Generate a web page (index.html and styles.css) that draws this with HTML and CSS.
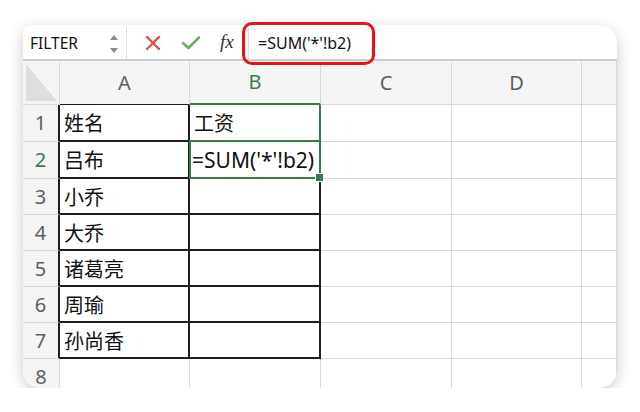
FILE: index.html
```html
<!DOCTYPE html>
<html lang="zh-CN">
<head>
  <meta charset="UTF-8">
  <title>SUM</title>
  <link rel="stylesheet" href="styles.css">
</head>
<body>
  <div class="sheet">
    <div class="fbar">
      <div class="namebox">
        <span>FILTER</span>
        <svg class="spin" width="10" height="20" viewBox="0 0 10 20">
          <path d="M1 6 L5 1 L9 6 Z" fill="#8a8a8a"/>
          <path d="M1 14 L5 19 L9 14 Z" fill="#8a8a8a"/>
        </svg>
      </div>
      <div class="tools">
        <svg width="16" height="16" viewBox="0 0 16 16">
          <path d="M2 2 L14 14 M14 2 L2 14" stroke="#d4504f" stroke-width="2.4" stroke-linecap="round"/>
        </svg>
        <svg width="20" height="16" viewBox="0 0 20 16">
          <path d="M2 8 L7.5 13 L18 2.5" stroke="#6cab5e" stroke-width="2.6" fill="none" stroke-linecap="round" stroke-linejoin="round"/>
        </svg>
        <span class="fx">fx</span>
      </div>
      <div class="formula">=SUM('*'!b2)</div>
    </div>
    <div class="ring"></div>

    <div class="gridwrap">
      <div class="grid">
        <div class="hd corner"></div>
        <div class="hd col tb">A</div>
        <div class="hd col on">B</div>
        <div class="hd col">C</div>
        <div class="hd col">D</div>
        <div class="hd col"></div>

        <div class="hd row tr">1</div>
        <div class="c t ref">姓名</div>
        <div class="c t ref">工资</div>
        <div class="c"></div><div class="c"></div><div class="c"></div>

        <div class="hd row tr on">2</div>
        <div class="c t">吕布</div>
        <div class="c t sel"><span class="big">=SUM('*'!b2)</span></div>
        <div class="c"></div><div class="c"></div><div class="c"></div>

        <div class="hd row tr">3</div>
        <div class="c t">小乔</div>
        <div class="c t"></div>
        <div class="c"></div><div class="c"></div><div class="c"></div>

        <div class="hd row tr">4</div>
        <div class="c t">大乔</div>
        <div class="c t"></div>
        <div class="c"></div><div class="c"></div><div class="c"></div>

        <div class="hd row tr">5</div>
        <div class="c t">诸葛亮</div>
        <div class="c t"></div>
        <div class="c"></div><div class="c"></div><div class="c"></div>

        <div class="hd row tr">6</div>
        <div class="c t">周瑜</div>
        <div class="c t"></div>
        <div class="c"></div><div class="c"></div><div class="c"></div>

        <div class="hd row tr">7</div>
        <div class="c t">孙尚香</div>
        <div class="c t"></div>
        <div class="c"></div><div class="c"></div><div class="c"></div>

        <div class="hd row">8</div>
        <div class="c"></div><div class="c"></div>
        <div class="c"></div><div class="c"></div><div class="c"></div>
      </div>
    </div>
  </div>
</body>
</html>
```

FILE: styles.css
```css
* {
  margin: 0;
  padding: 0;
  box-sizing: border-box;
}
body {
  background: #fff;
  font-family: "Noto Sans", "Noto Sans CJK SC", sans-serif;
  color: #111;
}
.sheet {
  position: relative;
  width: 594px;
  height: 363px;
  margin: 25px 0 0 23px;
  background: #fff;
  border-radius: 8px 18px 18px 18px;
  box-shadow: 0 4px 16px rgba(0, 0, 0, 0.2);
}

/* formula bar */
.fbar {
  display: flex;
  height: 36px;
  border-bottom: 2px solid #cdcdcd;
}
.namebox {
  display: flex;
  align-items: center;
  justify-content: space-between;
  width: 104px;
  padding: 0 7px 0 7px;
  margin: 2px 0 0;
  border-right: 1px solid #dcdcdc;
  font-size: 15.5px;
}
.spin {
  margin-top: 1px;
}
.tools {
  display: flex;
  align-items: center;
  width: 122px;
  padding-left: 18px;
  gap: 22px;
  border-right: 1px solid #dcdcdc;
  margin-top: 2px;
}
.tools svg:nth-child(2) {
  margin-left: -2px;
}
.fx {
  font-family: "Liberation Serif", serif;
  font-style: italic;
  font-size: 19px;
  color: #333;
  margin-left: -3px;
  margin-bottom: 2px;
}
.formula {
  display: flex;
  align-items: center;
  padding-left: 9px;
  font-size: 16px;
  margin-top: 2px;
}
.ring {
  position: absolute;
  left: 219px;
  top: -3px;
  width: 133px;
  height: 43px;
  border: 3px solid #e5141b;
  border-radius: 10px;
}

/* grid */
.gridwrap {
  height: 327px;
  overflow: hidden;
  border-radius: 0 0 18px 18px;
}
.grid {
  display: grid;
  grid-template-columns: 37px 130px 131px 131px 130px 1fr;
  grid-template-rows: 44px 37px 37px repeat(6, 36px);
}
.grid > div {
  border-right: 1px solid #d9d9d9;
  border-bottom: 1px solid #d9d9d9;
}
.hd {
  background: #f5f5f5;
  display: flex;
  align-items: center;
  justify-content: center;
  font-size: 20px;
  line-height: 1;
  color: #5e5e5e;
}
.corner {
  background: linear-gradient(to top right, #dedede 50%, transparent 50%) 3px 3px / 31px 37px no-repeat #f5f5f5;
}
.col.tb {
  border-bottom-color: #1f1f1f;
}
.col.on {
  color: #3c7a4e;
  border-bottom: 2px solid #3c7a4e;
}
.row.on {
  color: #3c7a4e;
}
.grid > .tr {
  border-right: 2px solid #1f1f1f;
}
.c {
  display: flex;
  align-items: center;
  padding-left: 4px;
  font-size: 20px;
  white-space: nowrap;
}
.grid > .t {
  border-right: 2px solid #1f1f1f;
  border-bottom: 2px solid #1f1f1f;
}
.grid > .ref:first-of-type {
  border-right-color: #3c7a4e;
}
.grid > .ref + .ref {
  border-right-color: #3c7a4e;
  border-bottom-color: #3c7a4e;
}
.sel {
  position: relative;
  overflow: visible;
  padding-left: 2px;
}
.sel::after {
  content: "";
  position: absolute;
  left: -1px;
  top: -2px;
  right: -2px;
  bottom: -2px;
  border: 2px solid #3c7a4e;
}
.sel::before {
  content: "";
  position: absolute;
  right: -5px;
  bottom: -5px;
  width: 7px;
  height: 7px;
  background: #3c7a4e;
  border: 1px solid #fff;
  z-index: 1;
}
.big {
  font-size: 21px;
}
```
